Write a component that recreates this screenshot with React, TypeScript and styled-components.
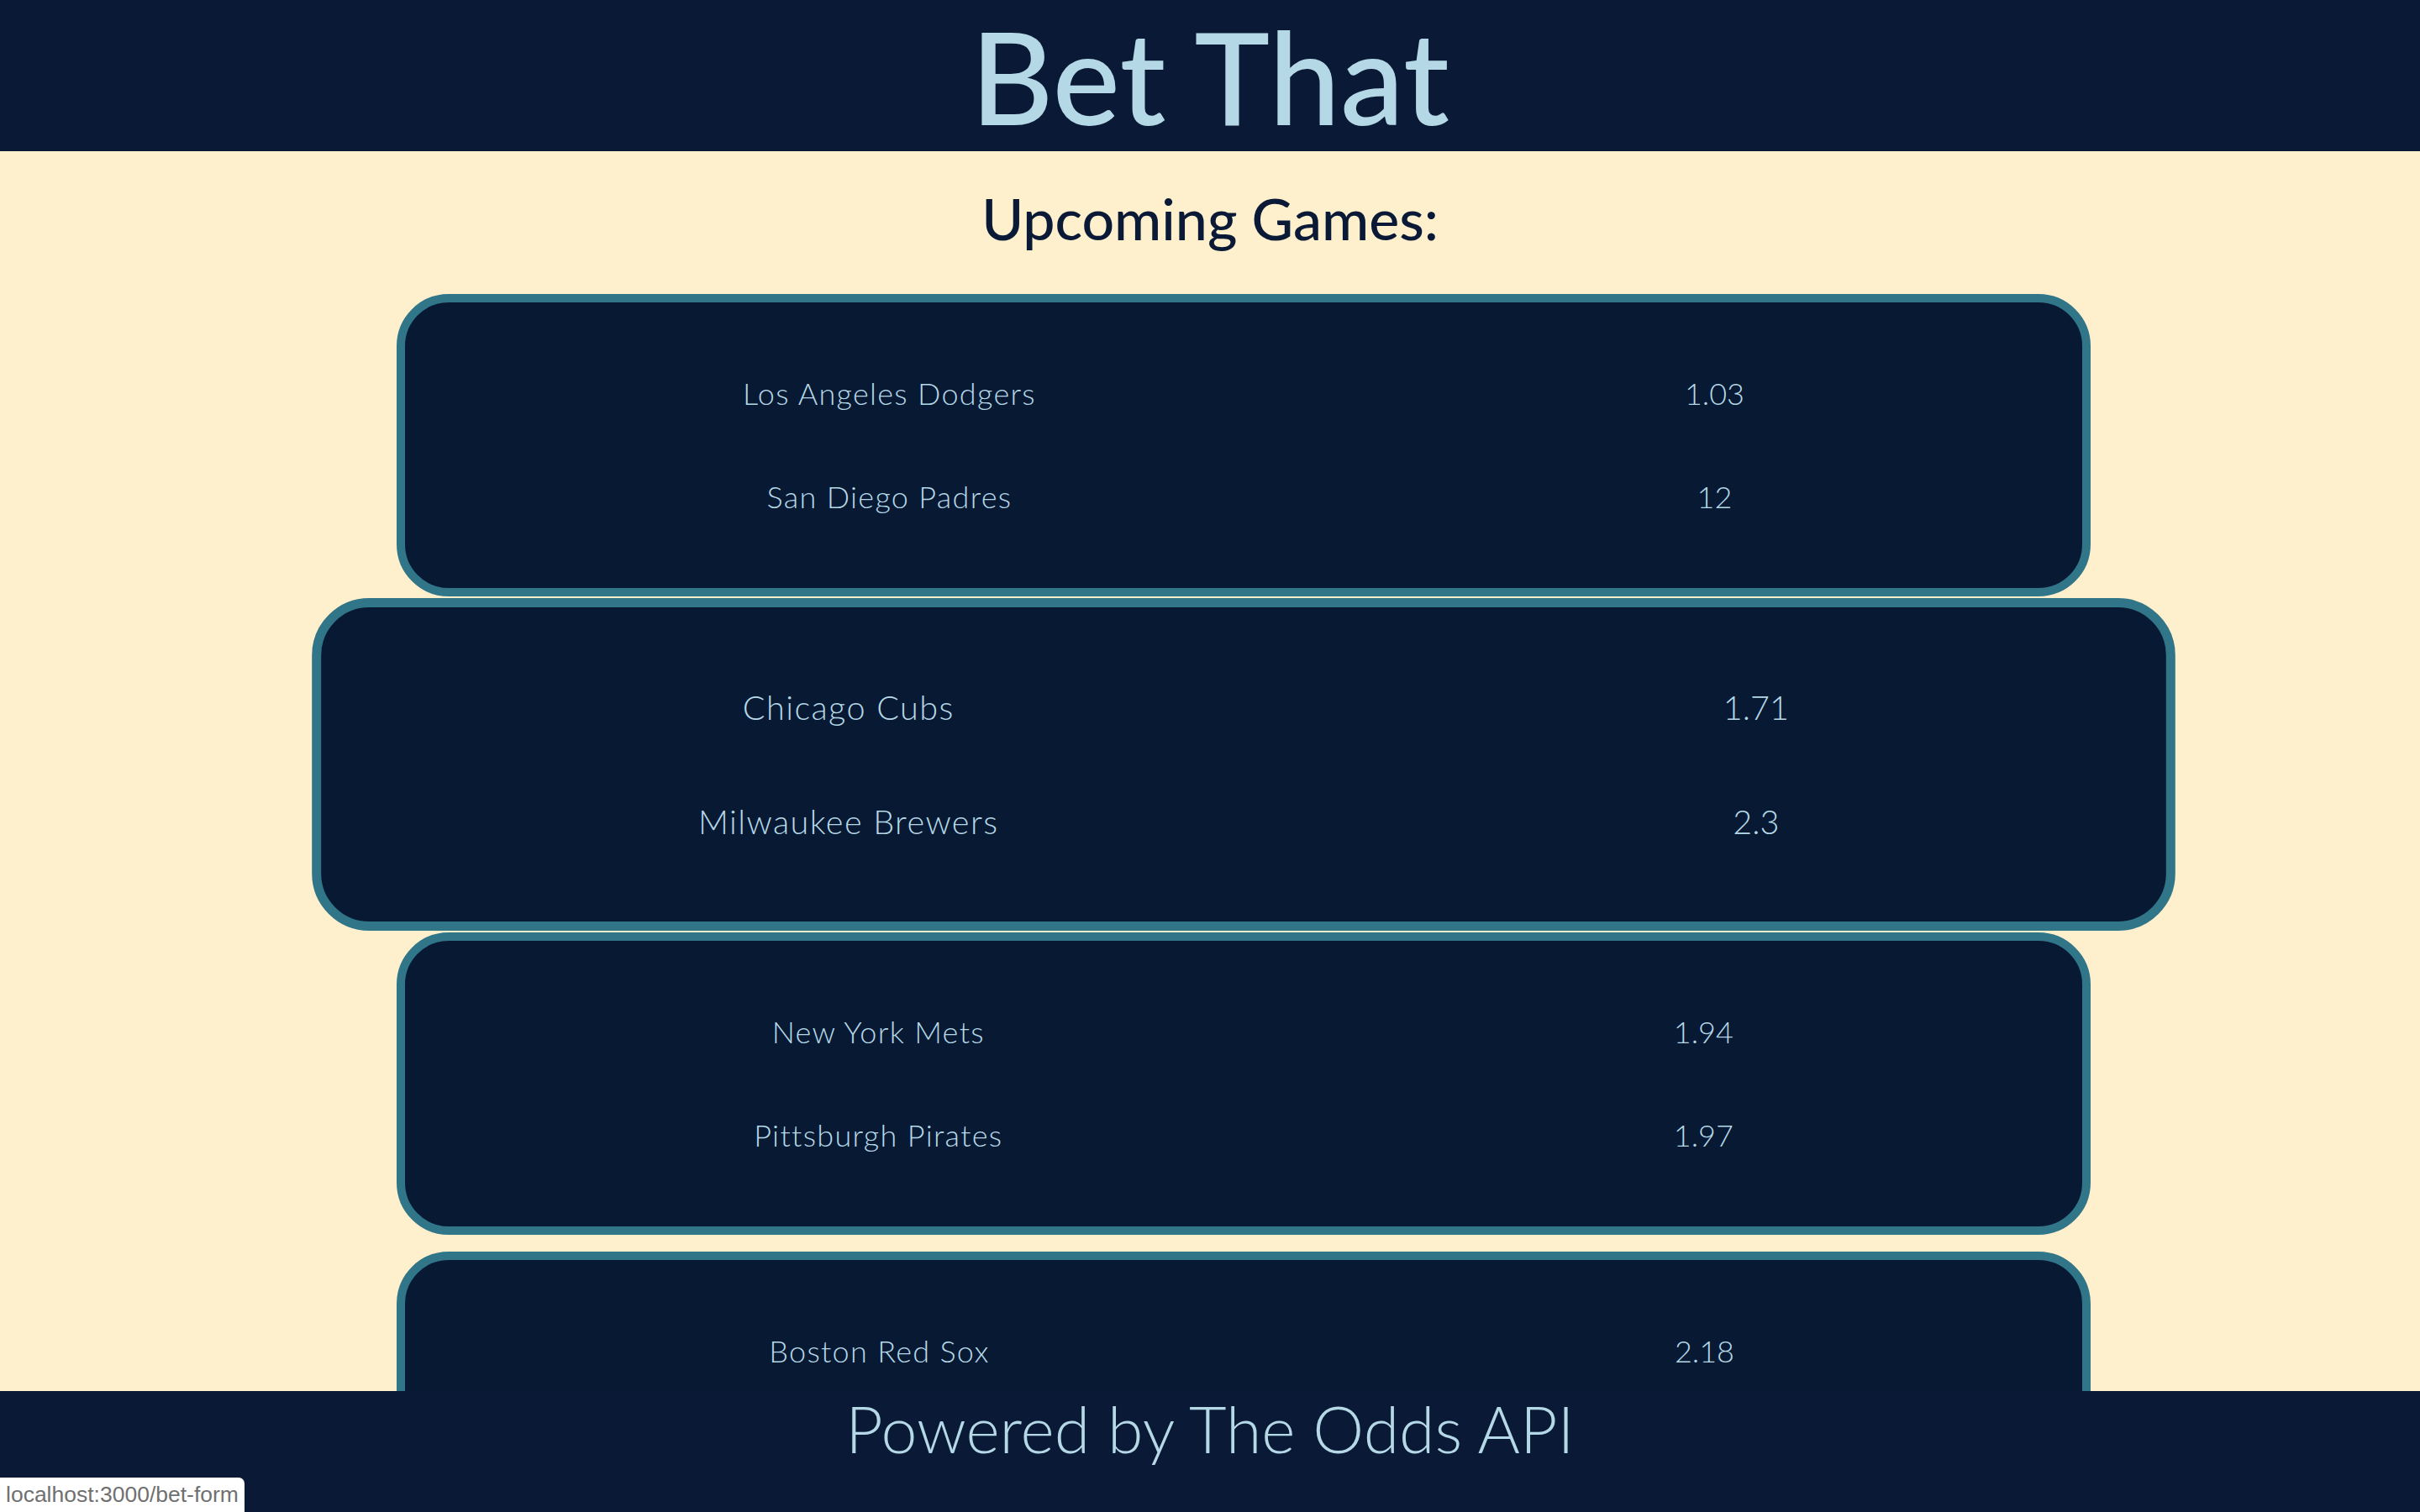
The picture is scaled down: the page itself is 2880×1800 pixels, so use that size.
import React from "react";
import styled, { createGlobalStyle, css } from "styled-components";

const NAVY = "#0a1a36";
const CARD = "#081934";
const TEAL = "#317588";
const CREAM = "#feefcd";
const ICE = "#b5d8e6";

const GlobalStyle = createGlobalStyle`
  html, body {
    margin: 0;
    padding: 0;
    background: ${CREAM};
    font-family: Lato, "Noto Sans", "Open Sans", sans-serif;
  }
`;

const Page = styled.div`
  height: 100vh;
  display: grid;
  grid-template-rows: 180px 1fr 144px;
  overflow: hidden;
`;

const Header = styled.header`
  background: ${NAVY};
  display: flex;
  align-items: center;
  justify-content: center;
`;

const Title = styled.h1`
  margin: 0;
  font-size: 152px;
  line-height: 1;
  font-weight: 500;
  color: ${ICE};
`;

const Main = styled.main`
  overflow: hidden;
  display: flex;
  flex-direction: column;
  align-items: center;
`;

const Heading = styled.h2`
  margin: 46px 0 56px;
  font-size: 68px;
  line-height: 1;
  font-weight: 500;
  color: ${NAVY};
`;

const GameList = styled.ul`
  list-style: none;
  margin: 0;
  padding: 0 0 0 80px;
  width: 100%;
  box-sizing: border-box;
  display: flex;
  flex-direction: column;
  align-items: center;
  gap: 20px;
`;

const Card = styled.li<{ $active?: boolean }>`
  width: 2016px;
  height: 360px;
  box-sizing: border-box;
  border: 10px solid ${TEAL};
  border-radius: 62px;
  background: ${CARD};
  display: flex;
  justify-content: space-around;
  align-items: center;
  padding: 0 16px 0 16px;
  flex-shrink: 0;
  ${(p) =>
    p.$active &&
    css`
      transform: scale(1.1);
    `}
`;

const Column = styled.div`
  display: flex;
  flex-direction: column;
  align-items: center;
`;

const Cell = styled.div<{ $numeric?: boolean }>`
  height: 125px;
  display: flex;
  align-items: center;
  margin-top: -2px;
  font-size: 36px;
  font-weight: 300;
  letter-spacing: ${(p) => (p.$numeric ? "0" : "1.3px")};
  color: ${ICE};
  white-space: nowrap;
`;

const Footer = styled.footer`
  background: ${NAVY};
  display: flex;
  justify-content: center;
  align-items: flex-start;
  padding-top: 6px;
  box-sizing: border-box;
`;

const FooterText = styled.p`
  margin: 0;
  font-size: 77px;
  line-height: 1;
  font-weight: 300;
  color: ${ICE};
`;

const StatusTip = styled.div`
  position: fixed;
  left: 0;
  bottom: 0;
  height: 41px;
  display: flex;
  align-items: center;
  padding: 0 7px;
  background: #ffffff;
  border-top-right-radius: 7px;
  font-family: "Liberation Sans", Arial, sans-serif;
  font-size: 26.5px;
  color: #707070;
`;

type Game = {
  home: string;
  away: string;
  homeOdds: string;
  awayOdds: string;
};

const games: Game[] = [
  { home: "Los Angeles Dodgers", away: "San Diego Padres", homeOdds: "1.03", awayOdds: "12" },
  { home: "Chicago Cubs", away: "Milwaukee Brewers", homeOdds: "1.71", awayOdds: "2.3" },
  { home: "New York Mets", away: "Pittsburgh Pirates", homeOdds: "1.94", awayOdds: "1.97" },
  { home: "Boston Red Sox", away: "New York Yankees", homeOdds: "2.18", awayOdds: "1.72" },
  { home: "Atlanta Braves", away: "Miami Marlins", homeOdds: "1.45", awayOdds: "2.8" },
];

export default function App() {
  return (
    <>
      <GlobalStyle />
      <Page>
        <Header>
          <Title>Bet That</Title>
        </Header>
        <Main>
          <Heading>Upcoming Games:</Heading>
          <GameList>
            {games.map((g, i) => (
              <Card key={g.home} $active={i === 1}>
                <Column>
                  <Cell>{g.home}</Cell>
                  <Cell>{g.away}</Cell>
                </Column>
                <Column>
                  <Cell $numeric>{g.homeOdds}</Cell>
                  <Cell $numeric>{g.awayOdds}</Cell>
                </Column>
              </Card>
            ))}
          </GameList>
        </Main>
        <Footer>
          <FooterText>Powered by The Odds API</FooterText>
        </Footer>
      </Page>
      <StatusTip>localhost:3000/bet-form</StatusTip>
    </>
  );
}
